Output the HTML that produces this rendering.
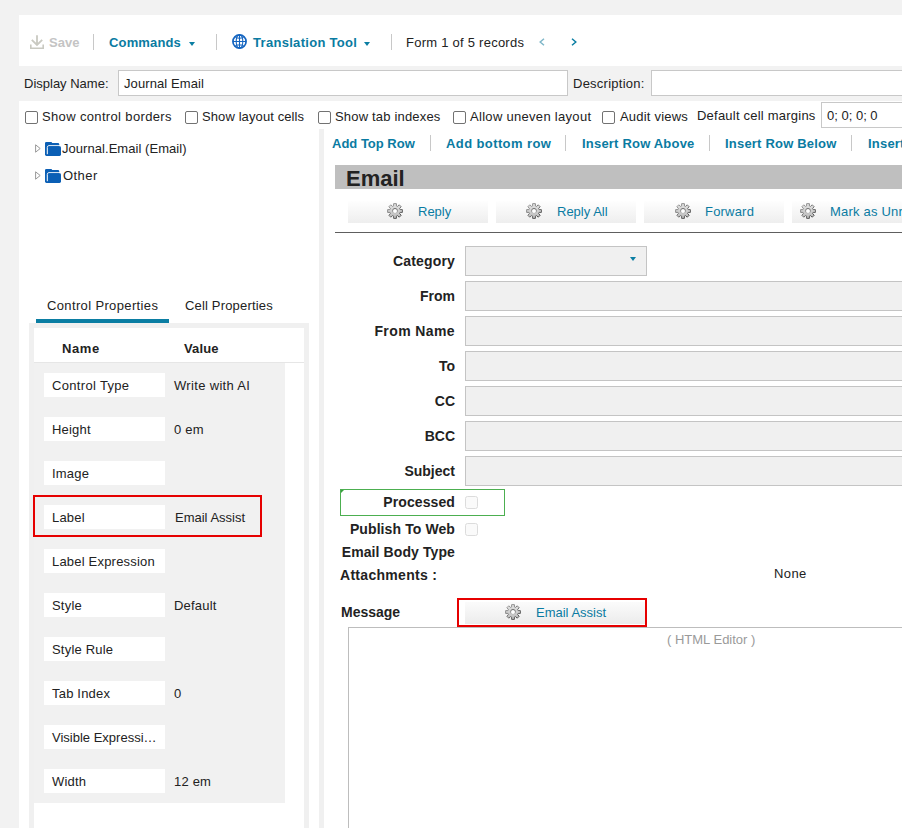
<!DOCTYPE html>
<html><head><meta charset="utf-8">
<style>
*{box-sizing:border-box;margin:0;padding:0}
html,body{width:902px;height:828px;overflow:hidden;background:#f2f2f2;font-family:"Liberation Sans",sans-serif;font-size:13px;color:#222}
.a{position:absolute}
.t{position:absolute;white-space:nowrap;line-height:15px;font-size:13px}
.b{font-weight:bold}
.lk{color:#0a7ba2}
.lb{position:absolute;white-space:nowrap;line-height:16px;font-size:14px;font-weight:bold;color:#222;text-align:right}
.sep{position:absolute;width:1px;background:#c8c8c8}
.cb{position:absolute;width:13px;height:13px;border:1px solid #727272;border-radius:2px;background:#fff}
.inp{position:absolute;border:1px solid #c4c4c4;background:#f0f0f0}
.btn{position:absolute;height:22px;background:linear-gradient(#fefefe,#eeeeee)}
.pn{position:absolute;left:44px;width:121px;height:24px;background:#fff}
</style></head><body>

<!-- toolbar white -->
<div class="a" style="left:19px;top:15px;width:883px;height:51px;background:#fff"></div>
<!-- lower white -->
<div class="a" style="left:19px;top:101px;width:883px;height:727px;background:#fff"></div>

<!-- save icon -->
<svg class="a" style="left:30px;top:35px" width="14" height="14" viewBox="0 0 14 14">
<path d="M7 0.3V10M1.8 4.8L7 10L12.2 4.8" stroke="#c9c9c1" stroke-width="1.8" fill="none"/>
<path d="M0.8 9.5V13.2H13.2V9.5" stroke="#c9c9c1" stroke-width="1.6" fill="none"/>
</svg>
<div class="t b" style="left:49px;top:35px;color:#c4c4c4">Save</div>
<div class="sep" style="left:93px;top:34px;height:16px"></div>
<div class="t b lk" style="left:109px;top:35px;letter-spacing:0.15px">Commands</div>
<svg class="a" style="left:189px;top:42px" width="6" height="4"><path d="M0 0H6L3 4Z" fill="#0b7ea3"/></svg>
<div class="sep" style="left:216px;top:34px;height:16px"></div>
<!-- globe -->
<svg class="a" style="left:232px;top:34px" width="15" height="15" viewBox="0 0 15 15">
<circle cx="7.5" cy="7.5" r="6.6" stroke="#1565c0" stroke-width="1.7" fill="none"/>
<path d="M7.5 1V14M1 7.5H14M3.5 3.6Q7.5 5 11.5 3.6M3.5 11.4Q7.5 10 11.5 11.4" stroke="#1565c0" stroke-width="1.1" fill="none"/>
<ellipse cx="7.5" cy="7.5" rx="3.3" ry="6.6" stroke="#1565c0" stroke-width="1.1" fill="none"/>
</svg>
<div class="t b lk" style="left:253px;top:35px;letter-spacing:0.3px">Translation Tool</div>
<svg class="a" style="left:364px;top:42px" width="6" height="4"><path d="M0 0H6L3 4Z" fill="#0b7ea3"/></svg>
<div class="sep" style="left:391px;top:34px;height:16px"></div>
<div class="t" style="left:406px;top:35px;letter-spacing:0.25px;color:#222">Form 1 of 5 records</div>
<svg class="a" style="left:539px;top:38px" width="6" height="8"><path d="M5 0.7L1.2 4L5 7.3" stroke="#7fb7c9" stroke-width="1.5" fill="none"/></svg>
<svg class="a" style="left:571px;top:38px" width="6" height="8"><path d="M1 0.7L4.8 4L1 7.3" stroke="#0b7ea3" stroke-width="1.5" fill="none"/></svg>

<!-- display name row -->
<div class="t" style="left:24px;top:76px">Display Name:</div>
<div class="a" style="left:118px;top:70px;width:450px;height:26px;background:#fff;border:1px solid #c8c8c8"></div>
<div class="t" style="left:124px;top:76px;letter-spacing:0.1px">Journal Email</div>
<div class="t" style="left:573px;top:76px;letter-spacing:0.25px">Description:</div>
<div class="a" style="left:651px;top:70px;width:260px;height:26px;background:#fff;border:1px solid #c8c8c8"></div>

<!-- checkbox row -->
<div class="cb" style="left:25px;top:111px"></div>
<div class="t" style="left:42px;top:109px;letter-spacing:0.35px">Show control borders</div>
<div class="cb" style="left:185px;top:111px"></div>
<div class="t" style="left:202px;top:109px;letter-spacing:0.1px">Show layout cells</div>
<div class="cb" style="left:318px;top:111px"></div>
<div class="t" style="left:335px;top:109px;letter-spacing:0.18px">Show tab indexes</div>
<div class="cb" style="left:453px;top:111px"></div>
<div class="t" style="left:470px;top:109px;letter-spacing:0.3px">Allow uneven layout</div>
<div class="cb" style="left:602px;top:111px"></div>
<div class="t" style="left:620px;top:109px;letter-spacing:0.2px">Audit views</div>
<div class="t" style="left:697px;top:108px;letter-spacing:0.22px">Default cell margins</div>
<div class="a" style="left:821px;top:102px;width:90px;height:26px;background:#fff;border:1px solid #c8c8c8"></div>
<div class="t" style="left:827px;top:108px">0; 0; 0; 0</div>

<!-- left tree -->
<svg class="a" style="left:35px;top:144px" width="6" height="9"><path d="M0.6 0.8L5.2 4.5L0.6 8.2Z" stroke="#999" stroke-width="1" fill="none"/></svg>
<svg class="a" style="left:45px;top:142px" width="16" height="14" viewBox="0 0 16 14"><rect x="0" y="0" width="7.2" height="3" rx="1.3" fill="#0b5fb5"/><rect x="0" y="1" width="14.3" height="13" rx="1.4" fill="#0b5fb5"/><path d="M2.3 12.2V5.4Q2.3 3.7 4 3.7H16" stroke="#fff" stroke-width="1" fill="none"/><rect x="3" y="4.3" width="13" height="9.7" rx="1.4" fill="#0b5fb5"/></svg>
<div class="t" style="left:62px;top:141px;letter-spacing:0.05px">Journal.Email (Email)</div>
<svg class="a" style="left:35px;top:171px" width="6" height="9"><path d="M0.6 0.8L5.2 4.5L0.6 8.2Z" stroke="#999" stroke-width="1" fill="none"/></svg>
<svg class="a" style="left:45px;top:169px" width="16" height="14" viewBox="0 0 16 14"><rect x="0" y="0" width="7.2" height="3" rx="1.3" fill="#0b5fb5"/><rect x="0" y="1" width="14.3" height="13" rx="1.4" fill="#0b5fb5"/><path d="M2.3 12.2V5.4Q2.3 3.7 4 3.7H16" stroke="#fff" stroke-width="1" fill="none"/><rect x="3" y="4.3" width="13" height="9.7" rx="1.4" fill="#0b5fb5"/></svg>
<div class="t" style="left:63px;top:168px;letter-spacing:0.45px">Other</div>

<!-- tabs -->
<div class="t" style="left:47px;top:298px;letter-spacing:0.36px">Control Properties</div>
<div class="t" style="left:185px;top:298px;letter-spacing:0.17px">Cell Properties</div>
<div class="a" style="left:36px;top:319px;width:133px;height:4px;background:#0b7ea3"></div>

<!-- properties container -->
<div class="a" style="left:29px;top:323px;width:280px;height:505px;background:#f0f0f0"></div>
<div class="a" style="left:34px;top:328px;width:270px;height:500px;background:#fff"></div>
<div class="a" style="left:34px;top:362px;width:270px;height:1px;background:#e6e6e6"></div>
<div class="t b" style="left:62px;top:341px;letter-spacing:0.6px">Name</div>
<div class="t b" style="left:184px;top:341px;letter-spacing:0.15px">Value</div>
<div class="a" style="left:34px;top:363px;width:251px;height:440px;background:#f1f1f1"></div>

<div class="pn" style="top:373px"></div><div class="t" style="left:52px;top:378px;letter-spacing:0.33px">Control Type</div><div class="t" style="left:174px;top:378px;letter-spacing:0.33px">Write with AI</div>
<div class="pn" style="top:417px"></div><div class="t" style="left:52px;top:422px;letter-spacing:0.2px">Height</div><div class="t" style="left:174px;top:422px;letter-spacing:0.2px">0 em</div>
<div class="pn" style="top:461px"></div><div class="t" style="left:52px;top:466px;letter-spacing:0.2px">Image</div>
<div class="pn" style="top:505px"></div><div class="t" style="left:52px;top:510px;letter-spacing:0.2px">Label</div><div class="t" style="left:175px;top:510px">Email Assist</div>
<div class="a" style="left:33px;top:495px;width:229px;height:42px;border:2px solid #e60000"></div>
<div class="pn" style="top:549px"></div><div class="t" style="left:52px;top:554px;letter-spacing:0.2px">Label Expression</div>
<div class="pn" style="top:593px"></div><div class="t" style="left:52px;top:598px;letter-spacing:0.2px">Style</div><div class="t" style="left:174px;top:598px;letter-spacing:0.2px">Default</div>
<div class="pn" style="top:637px"></div><div class="t" style="left:52px;top:642px;letter-spacing:0.2px">Style Rule</div>
<div class="pn" style="top:681px"></div><div class="t" style="left:52px;top:686px;letter-spacing:0.2px">Tab Index</div><div class="t" style="left:174px;top:686px">0</div>
<div class="pn" style="top:725px"></div><div class="t" style="left:52px;top:730px;letter-spacing:0px">Visible Expressi…</div>
<div class="pn" style="top:769px"></div><div class="t" style="left:52px;top:774px;letter-spacing:0.2px">Width</div><div class="t" style="left:174px;top:774px;letter-spacing:0.2px">12 em</div>

<!-- right panel strip -->
<div class="a" style="left:319px;top:129px;width:5px;height:699px;background:#f0f0f0"></div>

<!-- row actions -->
<div class="t b lk" style="left:332px;top:136px">Add Top Row</div>
<div class="sep" style="left:430px;top:135px;height:16px"></div>
<div class="t b lk" style="left:446px;top:136px;letter-spacing:0.4px">Add bottom row</div>
<div class="sep" style="left:565px;top:135px;height:16px"></div>
<div class="t b lk" style="left:582px;top:136px;letter-spacing:0.2px">Insert Row Above</div>
<div class="sep" style="left:709px;top:135px;height:16px"></div>
<div class="t b lk" style="left:725px;top:136px;letter-spacing:0.2px">Insert Row Below</div>
<div class="sep" style="left:851px;top:135px;height:16px"></div>
<div class="t b lk" style="left:868px;top:136px;letter-spacing:0.2px">Insert Column</div>

<!-- email header -->
<div class="a" style="left:335px;top:165px;width:567px;height:24px;background:#bfbfbf"></div>
<div class="t b" style="left:346px;top:167px;font-size:22px;line-height:23px;color:#222;letter-spacing:0px">Email</div>

<!-- buttons -->
<div class="btn" style="left:348px;top:201px;width:140px"></div>
<div class="btn" style="left:496px;top:201px;width:140px"></div>
<div class="btn" style="left:644px;top:201px;width:140px"></div>
<div class="btn" style="left:792px;top:201px;width:140px"></div>
<div class="t lk" style="left:418px;top:204px">Reply</div>
<div class="t lk" style="left:557px;top:204px">Reply All</div>
<div class="t lk" style="left:705px;top:204px;letter-spacing:0.2px">Forward</div>
<div class="t lk" style="left:830px;top:204px;letter-spacing:0.2px">Mark as Unread</div>
<div class="a" style="left:335px;top:232px;width:567px;height:1px;background:#5e5e5e"></div>

<!-- form -->
<div class="lb" style="left:354px;width:101px;top:253px;letter-spacing:0.15px">Category</div>
<div class="inp" style="left:465px;top:246px;width:182px;height:30px"></div>
<svg class="a" style="left:630px;top:257px" width="6" height="4"><path d="M0 0H6L3 4Z" fill="#0b7ea3"/></svg>
<div class="lb" style="left:354px;width:101px;top:288px">From</div>
<div class="inp" style="left:465px;top:281px;width:450px;height:30px"></div>
<div class="lb" style="left:354px;width:101px;top:323px;letter-spacing:0.4px">From Name</div>
<div class="inp" style="left:465px;top:316px;width:450px;height:30px"></div>
<div class="lb" style="left:354px;width:101px;top:358px">To</div>
<div class="inp" style="left:465px;top:351px;width:450px;height:30px"></div>
<div class="lb" style="left:354px;width:101px;top:393px">CC</div>
<div class="inp" style="left:465px;top:386px;width:450px;height:30px"></div>
<div class="lb" style="left:354px;width:101px;top:428px">BCC</div>
<div class="inp" style="left:465px;top:421px;width:450px;height:30px"></div>
<div class="lb" style="left:354px;width:101px;top:463px">Subject</div>
<div class="inp" style="left:465px;top:456px;width:450px;height:30px"></div>

<div class="a" style="left:340px;top:489px;width:165px;height:27px;border:1px solid #4caf50"></div>
<svg class="a" style="left:341px;top:490px" width="3" height="3"><path d="M0 0H3L0 3Z" fill="#3aa040"/></svg>
<div class="lb" style="left:344px;width:111px;top:494px;letter-spacing:0.1px">Processed</div>
<div class="a" style="left:465px;top:496px;width:13px;height:13px;border:1px solid #dcdcdc;border-radius:2.5px;background:#fafafa"></div>
<div class="lb" style="left:334px;width:121px;top:521px;letter-spacing:0.1px">Publish To Web</div>
<div class="a" style="left:465px;top:523px;width:13px;height:13px;border:1px solid #dcdcdc;border-radius:2.5px;background:#fafafa"></div>
<div class="lb" style="left:334px;width:121px;top:544px;letter-spacing:0.1px">Email Body Type</div>
<div class="lb" style="left:340px;top:567px;text-align:left;letter-spacing:0.3px">Attachments :</div>
<div class="t" style="left:774px;top:566px;letter-spacing:0.4px">None</div>

<div class="lb" style="left:341px;top:604px;text-align:left">Message</div>
<div class="btn" style="left:465px;top:602px;width:180px;height:22px;background:linear-gradient(#fbfbfb,#ececec)"></div>
<div class="a" style="left:457px;top:598px;width:190px;height:29px;border:2px solid #e60000"></div>
<div class="t lk" style="left:536px;top:605px">Email Assist</div>

<div class="a" style="left:348px;top:627px;width:600px;height:220px;border:1px solid #bdbdbd;background:#fff"></div>
<div class="t" style="left:667px;top:632px;color:#9a9a9a">( HTML Editor )</div>

<!-- gears -->
<svg width="0" height="0" style="position:absolute">
<defs>
<linearGradient id="gg" x1="0" y1="0" x2="0" y2="1"><stop offset="0" stop-color="#e4e4e4"/><stop offset="1" stop-color="#bababa"/></linearGradient><linearGradient id="gs" x1="0" y1="0" x2="0.8" y2="1"><stop offset="0" stop-color="#a8a8a8"/><stop offset="1" stop-color="#4a4a4a"/></linearGradient><linearGradient id="gs2" x1="0" y1="0" x2="0" y2="1"><stop offset="0" stop-color="#666"/><stop offset="1" stop-color="#bbb"/></linearGradient>
<symbol id="gear" viewBox="0 0 16 16">
<path d="M13.12 6.64L15.37 6.58L15.37 9.42L13.12 9.36L12.59 10.66L14.21 12.21L12.21 14.21L10.66 12.59L9.36 13.12L9.42 15.37L6.58 15.37L6.64 13.12L5.34 12.59L3.79 14.21L1.79 12.21L3.41 10.66L2.88 9.36L0.63 9.42L0.63 6.58L2.88 6.64L3.41 5.34L1.79 3.79L3.79 1.79L5.34 3.41L6.64 2.88L6.58 0.63L9.42 0.63L9.36 2.88L10.66 3.41L12.21 1.79L14.21 3.79L12.59 5.34Z" fill="url(#gg)" stroke="url(#gs)" stroke-width="1" stroke-linejoin="round"/>
<circle cx="8" cy="8" r="2.5" fill="#fff" stroke="url(#gs2)" stroke-width="1"/>
</symbol>
</defs></svg>
<svg class="a" style="left:387px;top:203px" width="16" height="16"><use href="#gear"/></svg>
<svg class="a" style="left:526px;top:203px" width="16" height="16"><use href="#gear"/></svg>
<svg class="a" style="left:675px;top:203px" width="16" height="16"><use href="#gear"/></svg>
<svg class="a" style="left:800px;top:203px" width="16" height="16"><use href="#gear"/></svg>
<svg class="a" style="left:505px;top:604px" width="16" height="16"><use href="#gear"/></svg>

</body></html>
